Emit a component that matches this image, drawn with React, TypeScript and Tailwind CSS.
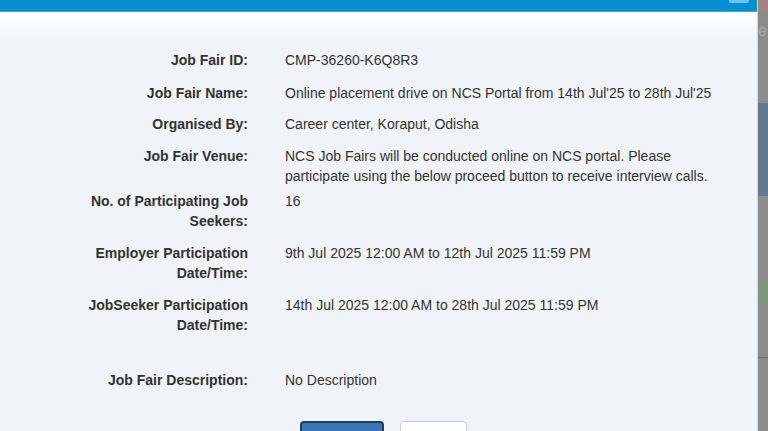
import React from 'react'

const rows: { label: string[]; value: string[]; gap: string }[] = [
  { label: ['Job Fair ID:'], value: ['CMP-36260-K6Q8R3'], gap: 'mb-[13px]' },
  { label: ['Job Fair Name:'], value: ["Online placement drive on NCS Portal from 14th Jul'25 to 28th Jul'25"], gap: 'mb-[11px]' },
  { label: ['Organised By:'], value: ['Career center, Koraput, Odisha'], gap: 'mb-[12px]' },
  {
    label: ['Job Fair Venue:'],
    value: [
      'NCS Job Fairs will be conducted online on NCS portal. Please',
      'participate using the below proceed button to receive interview calls.',
    ],
    gap: 'mb-[5px]',
  },
  { label: ['No. of Participating Job', 'Seekers:'], value: ['16'], gap: 'mb-[12px]' },
  { label: ['Employer Participation', 'Date/Time:'], value: ['9th Jul 2025 12:00 AM to 12th Jul 2025 11:59 PM'], gap: 'mb-[12px]' },
  { label: ['JobSeeker Participation', 'Date/Time:'], value: ['14th Jul 2025 12:00 AM to 28th Jul 2025 11:59 PM'], gap: 'mb-[35px]' },
  { label: ['Job Fair Description:'], value: ['No Description'], gap: 'mb-[31px]' },
]

export default function App() {
  return (
    <div className="flex h-[431px] w-[768px] overflow-hidden bg-[#8c8c8c] font-['Liberation_Sans',Arial,sans-serif] text-[14px] leading-[20px] text-[#333]">
      {/* modal */}
      <div className="flex w-[758px] flex-col border-r border-[#c9d9ea]">
        <div className="relative h-[12px] shrink-0 border-b border-[#3aa6dc] bg-[#0790d0]">
          <div className="absolute right-[8px] top-0 h-[3px] w-[20px] rounded-b-[2px] bg-[#6cc0ea]" />
        </div>
        <div className="flex-1 bg-gradient-to-b from-white to-[#f0f4f8] to-[30px] pt-[38px]">
          {rows.map((r) => (
            <div key={r.label.join(' ')} className={`flex ${r.gap}`}>
              <div className="w-[248px] text-right font-bold">
                {r.label.map((l) => (
                  <div key={l}>{l}</div>
                ))}
              </div>
              <div className="ml-[37px]">
                {r.value.map((v) => (
                  <div key={v}>{v}</div>
                ))}
              </div>
            </div>
          ))}
          <div className="flex">
            <button className="ml-[300px] h-[34px] w-[84px] rounded-[4px] border-2 border-[#1f3f5f] bg-[#3a76b5] text-white" />
            <button className="ml-[16px] h-[34px] w-[67px] rounded-[4px] border border-[#c4ccd4] bg-white" />
          </div>
        </div>
      </div>
      {/* backdrop strip */}
      <div className="flex w-[10px] flex-col">
        <div className="h-[11px] bg-[#a58480]" />
        <div className="h-[92px] pt-[10px] text-[16px] text-[#a8a8a8]">e</div>
        <div className="h-[93px] bg-[#66788f]" />
        <div className="h-[87px]" />
        <div className="h-[20px] bg-[#7c977c]" />
        <div className="h-[55px] border-b border-[#6e6e6e]" />
        <div className="flex-1" />
      </div>
    </div>
  )
}
